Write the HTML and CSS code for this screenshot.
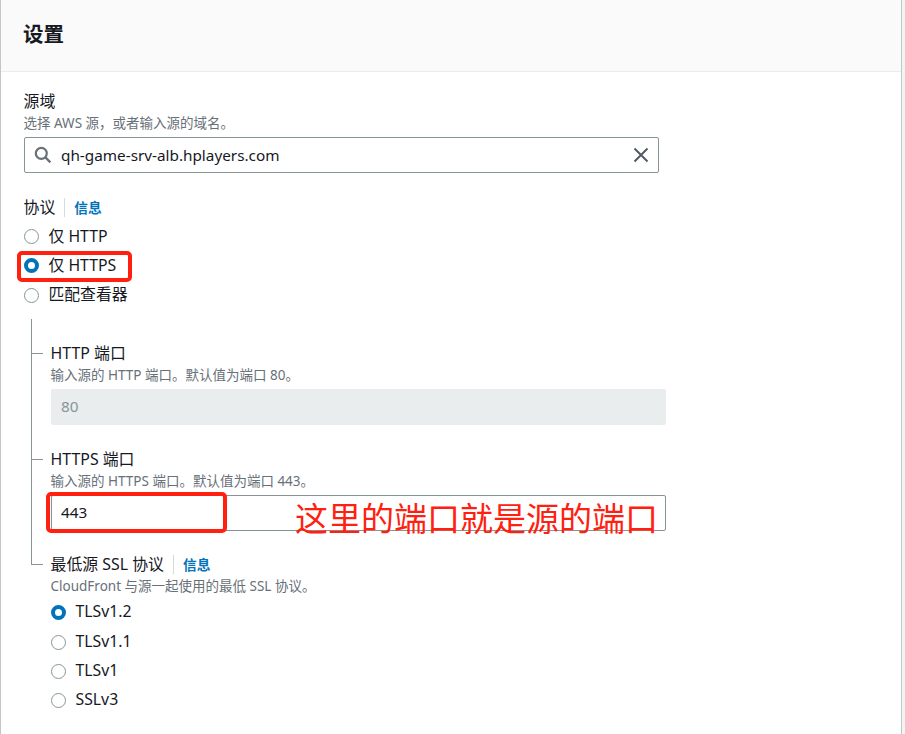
FILE: index.html
```
<!DOCTYPE html>
<html lang="zh-CN">
<head>
    <meta charset="UTF-8">
    <meta name="viewport" content="width=device-width, initial-scale=1.0">
    <title>设置</title>
    <link rel="stylesheet" href="styles.css">
</head>
<body>
    <main class="panel">
        <header class="panel-header">
            <h2>设置</h2>
        </header>
        <div class="panel-body">
            <section class="field origin">
                <div class="label"><span>源域</span></div>
                <div class="hint"><span>选择 AWS 源，或者输入源的域名。</span></div>
                <div class="input">
                    <svg class="search" viewBox="0 0 18 18" width="18" height="18">
                        <circle cx="7.3" cy="7.3" r="5.5"/>
                        <path d="M11.4 11.4L16.4 16.4"/>
                    </svg>
                    <span class="value">qh-game-srv-alb.hplayers.com</span>
                    <svg class="close" viewBox="0 0 16 16" width="16" height="16">
                        <path d="M1.5 1.5L14.5 14.5M14.5 1.5L1.5 14.5"/>
                    </svg>
                </div>
            </section>

            <section class="protocol">
                <div class="label"><span>协议</span><a class="info">信息</a></div>
                <ul class="radios">
                    <li><i class="radio"></i><span>仅 HTTP</span></li>
                    <li class="marked"><i class="radio checked"></i><span>仅 HTTPS</span></li>
                    <li><i class="radio"></i><span>匹配查看器</span></li>
                </ul>
            </section>

            <div class="tree">
                <section class="field branch">
                    <div class="label"><span>HTTP 端口</span></div>
                    <div class="hint"><span>输入源的 HTTP 端口。默认值为端口 80。</span></div>
                    <div class="input disabled"><span class="value">80</span></div>
                </section>
                <section class="field branch">
                    <div class="label"><span>HTTPS 端口</span></div>
                    <div class="hint"><span>输入源的 HTTPS 端口。默认值为端口 443。</span></div>
                    <div class="input port">
                        <span class="value">443</span>
                        <span class="note">这里的端口就是源的端口</span>
                    </div>
                </section>
                <section class="field branch last">
                    <div class="label"><span>最低源 SSL 协议</span><a class="info">信息</a></div>
                    <div class="hint"><span>CloudFront 与源一起使用的最低 SSL 协议。</span></div>
                    <ul class="radios">
                        <li><i class="radio checked"></i><span>TLSv1.2</span></li>
                        <li><i class="radio"></i><span>TLSv1.1</span></li>
                        <li><i class="radio"></i><span>TLSv1</span></li>
                        <li><i class="radio"></i><span>SSLv3</span></li>
                    </ul>
                </section>
            </div>
        </div>
    </main>
</body>
</html>
```

FILE: styles.css
```
*, *::before, *::after{
 box-sizing: border-box;
}
body{
 margin: 0;
 height: 734px;
 overflow: hidden;
 background-color: #f2f3f3;
 color: #16191f;
 font-family: "Noto Sans", "Noto Sans CJK SC", sans-serif;
 font-size: 15.3px;
}
.panel{
 width: 902px;
 height: 734px;
 background-color: #fff;
 border-left: 1px solid #c0c6ca;
 border-right: 1px solid #c0c8c8;
}
.panel-header{
 height: 72px;
 padding: 20px 22px;
 background-color: #fafafa;
 border-bottom: 1px solid #eaeded;
}
h2{
 margin: 0;
 font-size: 20.5px;
 line-height: 28px;
 font-weight: 700;
}
.panel-body{
 padding: 18px 23px 0;
}
.label{
 display: flex;
 align-items: center;
 height: 22px;
 line-height: 22px;
 font-size: 15.9px;
 white-space: nowrap;
}
.label span, .hint span{
 margin-left: -0.5px;
}
.hint{
 height: 20px;
 margin-top: 1px;
 line-height: 20px;
 font-size: 13.5px;
 color: #687078;
 white-space: nowrap;
}
.info{
 margin-left: 9px;
 padding-left: 9px;
 height: 19px;
 line-height: 19px;
 border-left: 1px solid #d5dbdb;
 color: #0073bb;
 font-size: 13.7px;
 font-weight: 700;
}
.input{
 display: flex;
 align-items: center;
 height: 36px;
 margin-top: 4px;
 padding: 0 9px;
 border: 1px solid #879596;
 border-radius: 2px;
 background-color: #fff;
}
.origin .input{
 width: 635px;
}
.value{
 flex: 1;
}
.search, .close{
 fill: none;
 stroke-width: 2;
}
.search{
 margin-right: 9px;
 stroke: #687078;
 stroke-width: 2.2;
}
.close{
 stroke: #545b64;
}
.disabled{
 background-color: #eaeded;
 border-color: #eaeded;
 color: #879596;
}
.protocol{
 margin-top: 23px;
}
.radios{
 list-style: none;
 margin: 4px 0 0;
 padding: 0;
}
.radios li{
 display: flex;
 align-items: center;
 gap: 9.5px;
 height: 29.3px;
 font-size: 15.8px;
 white-space: nowrap;
}
.radios span{
 padding-bottom: 3px;
}
.radio{
 width: 15px;
 height: 15px;
 border: 1px solid #879596;
 border-radius: 50%;
}
.radio.checked{
 border: 4px solid #0073bb;
}
/* red highlight frames */
.marked, .port{
 position: relative;
}
.marked::after, .port::after{
 content: "";
 position: absolute;
 border: 4px solid #ff2010;
 border-radius: 5px;
}
.marked::after{
 left: -7.5px;
 top: 0;
 width: 115px;
 height: 31px;
}
.port::after{
 left: -6px;
 top: -4px;
 width: 181px;
 height: 41px;
}
.port .value, .disabled .value{
 padding-bottom: 1px;
}
.note{
 position: absolute;
 left: 243px;
 top: 0;
 line-height: 46px;
 font-size: 33px;
 color: #ff2010;
 white-space: nowrap;
}
.tree{
 width: 642px;
 margin-top: 9px;
 padding-top: 23px;
 position: relative;
}
/* vertical line joining the branches */
.tree::before{
 content: "";
 position: absolute;
 left: 7px;
 top: 0;
 width: 1px;
 height: 246px;
 background-color: #879596;
}
.branch{
 position: relative;
 padding-left: 27px;
 margin-bottom: 22.7px;
}
.branch::before{
 content: "";
 position: absolute;
 left: 7px;
 top: 11px;
 width: 12px;
 height: 1px;
 background-color: #879596;
}
.last .radios{
 margin-top: 2px;
}
```
